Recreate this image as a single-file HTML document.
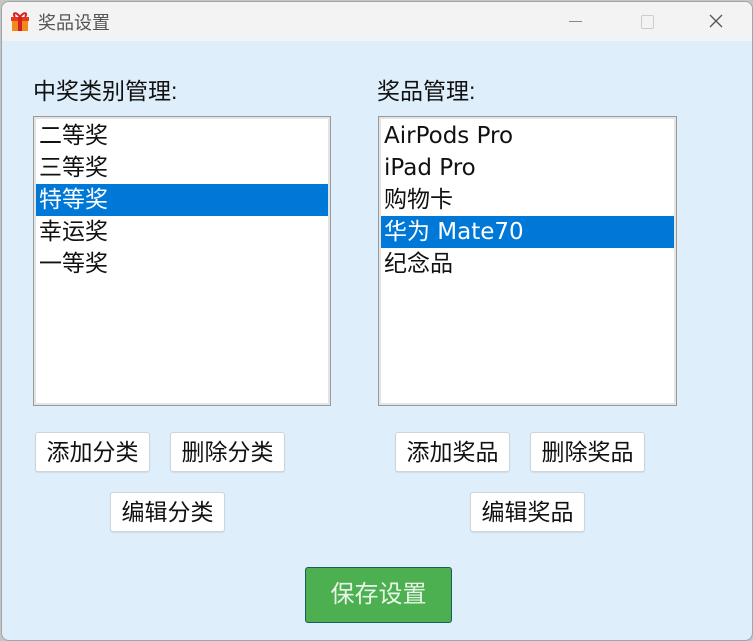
<!DOCTYPE html>
<html><head><meta charset="utf-8"><style>
body{margin:0;width:753px;height:641px;background:#c9c4c0;position:relative;overflow:hidden;font-family:"Liberation Sans","Noto Sans CJK SC",sans-serif;}
.win{position:absolute;left:1px;top:1px;width:750px;height:638px;border:1px solid #9aa6b0;border-radius:8px;background:#deeefb;overflow:hidden;}
.tb{height:39px;background:#f3f3f3;position:relative;}
.tb .t{position:absolute;left:36px;top:7px;font-size:18px;color:#555;}
.abs{position:absolute;}
.lbl{font-size:23px;color:#111;}
.list{position:absolute;background:#fff;border:1px solid #999;box-shadow:inset 0 0 0 2px #e4e4e4;}
.it{height:32px;line-height:32px;font-family:"DejaVu Sans","Noto Sans CJK SC",sans-serif;font-size:23px;color:#111;padding-left:3px;white-space:nowrap;}
.sel{background:#0078d7;color:#fff;}
.btn{position:absolute;width:113px;height:38px;background:#fff;border:1px solid #d0d4d8;border-radius:3px;text-align:center;line-height:38px;font-size:23px;color:#111;box-shadow:0 1px 1px rgba(0,0,0,.08);}
.save{position:absolute;left:303px;top:565px;width:145px;height:54px;background:#4caf50;border:1px solid #1e5a5a;border-radius:3px;color:#e8f5e8;font-size:24px;text-align:center;line-height:54px;}
</style></head><body>
<div class="win">
 <div class="tb">
  <svg class="abs" style="left:7px;top:8px" width="22" height="22" viewBox="0 0 22 22"><rect x="3" y="8" width="16" height="13" fill="#f08a1c"/><rect x="2" y="7" width="18" height="4" fill="#e53b1c"/><rect x="9" y="7" width="4" height="14" fill="#d81e1e"/><path d="M11 7C7 1 3 3 6 7M11 7C15 1 19 3 16 7" stroke="#d81e1e" stroke-width="2" fill="none"/></svg>
  <div class="t">奖品设置</div>
  <div class="abs" style="left:567px;top:19px;width:13px;height:1px;background:#888"></div>
  <div class="abs" style="left:639px;top:13px;width:11px;height:12px;border:1px solid #ccc;border-radius:2px"></div>
  <svg class="abs" style="left:707px;top:12px" width="14" height="14"><path d="M1 1L13 13M13 1L1 13" stroke="#555" stroke-width="1.3"/></svg>
 </div>
 <div class="abs lbl" style="left:31px;top:70px">中奖类别管理:</div>
 <div class="abs lbl" style="left:375px;top:70px">奖品管理:</div>
 <div class="list" style="left:31px;top:114px;width:298px;height:290px;padding-top:3px;box-sizing:border-box">
  <div style="margin:0 2px">
  <div class="it">二等奖</div><div class="it">三等奖</div><div class="it sel">特等奖</div><div class="it">幸运奖</div><div class="it">一等奖</div>
  </div>
 </div>
 <div class="list" style="left:376px;top:114px;width:299px;height:290px;padding-top:3px;box-sizing:border-box">
  <div style="margin:0 2px">
  <div class="it">AirPods Pro</div><div class="it">iPad Pro</div><div class="it">购物卡</div><div class="it sel">华为 Mate70</div><div class="it">纪念品</div>
  </div>
 </div>
 <div class="btn" style="left:33px;top:430px">添加分类</div>
 <div class="btn" style="left:168px;top:430px">删除分类</div>
 <div class="btn" style="left:108px;top:490px">编辑分类</div>
 <div class="btn" style="left:393px;top:430px">添加奖品</div>
 <div class="btn" style="left:528px;top:430px">删除奖品</div>
 <div class="btn" style="left:468px;top:490px">编辑奖品</div>
 <div class="save">保存设置</div>
</div>
</body></html>
